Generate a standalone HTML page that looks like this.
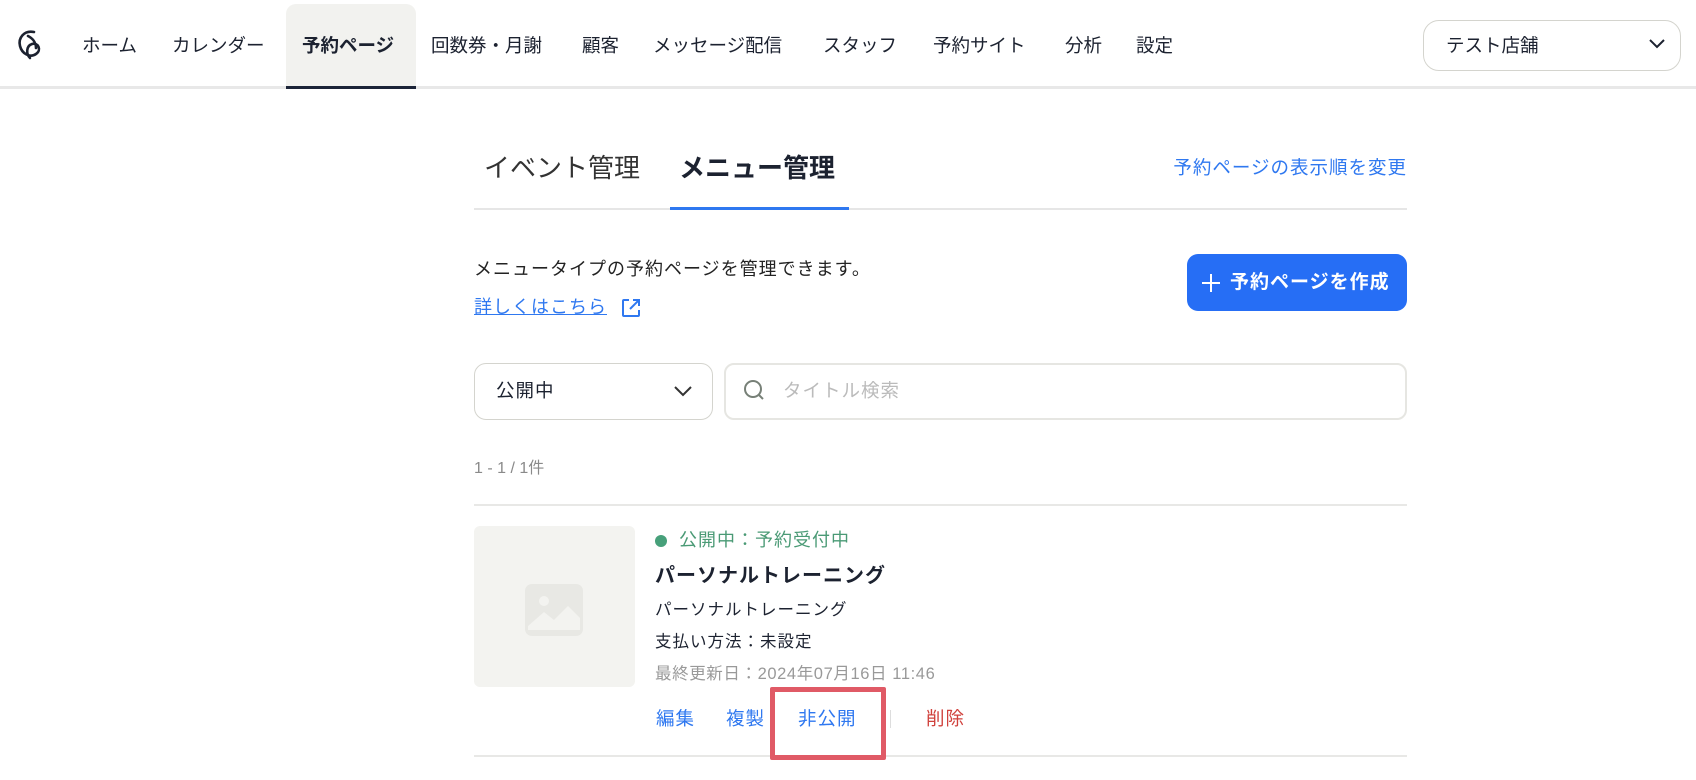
<!DOCTYPE html>
<html><head><meta charset="utf-8"><style>
*{margin:0;padding:0;box-sizing:border-box}
body{width:1696px;height:780px;background:#fff;position:relative;overflow:hidden;font-family:"Liberation Sans","Noto Sans CJK JP",sans-serif;color:#1c2230}
.a{position:absolute;white-space:nowrap}
.nav{font-size:18.5px;line-height:30px;top:31px;color:#1c2230}
.blue{color:#2f78f0}
.ls{letter-spacing:1px}
</style></head><body>
<div class="a" style="left:0;top:86px;width:1696px;height:3px;background:#e8e8e8"></div>
<div class="a" style="left:286px;top:4px;width:130px;height:83px;background:#f2f2ef;border-radius:10px 10px 0 0"></div>
<div class="a" style="left:286px;top:86px;width:130px;height:3px;background:#1c2438"></div>
<svg class="a" style="left:14px;top:28px" width="32" height="36" viewBox="0 0 32 36"><path d="M20 4 C10 2 4 10 6 18 C8 26 16 30 22 26 C28 22 24 14 18 16 C12 18 12 26 16 30 M14 8 C18 10 22 14 22 20" fill="none" stroke="#1c2230" stroke-width="2.6" stroke-linecap="round"/></svg>
<div class="a nav" style="left:82px">ホーム</div>
<div class="a nav" style="left:172px">カレンダー</div>
<div class="a nav" style="left:302px;font-weight:bold">予約ページ</div>
<div class="a nav" style="left:431px">回数券・月謝</div>
<div class="a nav" style="left:582px">顧客</div>
<div class="a nav" style="left:653px">メッセージ配信</div>
<div class="a nav" style="left:823px">スタッフ</div>
<div class="a nav" style="left:933px">予約サイト</div>
<div class="a nav" style="left:1065px">分析</div>
<div class="a nav" style="left:1136px">設定</div>
<div class="a" style="left:1423px;top:20px;width:258px;height:51px;border:1.5px solid #d4d4ce;border-radius:16px"></div>
<div class="a" style="left:1446px;top:31px;font-size:18.5px;line-height:30px">テスト店舗</div>
<svg class="a" style="left:1648px;top:38px" width="18" height="12"><path d="M2 2 L9 9 L16 2" fill="none" stroke="#1c2230" stroke-width="2"/></svg>

<div class="a" style="left:474px;top:208px;width:933px;height:2px;background:#e6e6e6"></div>
<div class="a" style="left:670px;top:207px;width:179px;height:3px;background:#2f78f0"></div>
<div class="a" style="left:484px;top:150px;font-size:26px;line-height:36px;color:#333">イベント管理</div>
<div class="a" style="left:679px;top:150px;font-size:26px;line-height:36px;font-weight:bold">メニュー管理</div>
<div class="a blue ls" style="right:289px;top:154px;font-size:18.5px;line-height:28px">予約ページの表示順を変更</div>

<div class="a ls" style="left:474px;top:255px;font-size:18px;line-height:28px;color:#222">メニュータイプの予約ページを管理できます。</div>
<div class="a blue ls" style="left:474px;top:293px;font-size:18px;line-height:28px;text-decoration:underline">詳しくはこちら</div>
<svg class="a" style="left:620px;top:297px" width="22" height="22" viewBox="0 0 22 22"><path d="M9 3 H4 Q3 3 3 4 V18 Q3 19 4 19 H18 Q19 19 19 18 V13 M13 3 H19 V9 M19 3 L10 12" fill="none" stroke="#2f78f0" stroke-width="2"/></svg>
<div class="a ls" style="left:1187px;top:254px;width:220px;height:57px;background:#266ef5;border-radius:11px;color:#fff;font-size:19px;font-weight:bold;line-height:57px;padding-left:43px">予約ページを作成</div>
<svg class="a" style="left:1200px;top:272px" width="22" height="22"><path d="M11 2 V20 M2 11 H20" stroke="#fff" stroke-width="2"/></svg>

<div class="a" style="left:474px;top:363px;width:239px;height:57px;border:1.5px solid #d4d4ce;border-radius:12px"></div>
<div class="a ls" style="left:496px;top:377px;font-size:18.5px;line-height:28px">公開中</div>
<svg class="a" style="left:673px;top:385px" width="20" height="14"><path d="M2 2 L10 10 L18 2" fill="none" stroke="#333" stroke-width="2"/></svg>
<div class="a" style="left:724px;top:363px;width:683px;height:57px;border:2px solid #e6e6e2;border-radius:10px"></div>
<svg class="a" style="left:742px;top:378px" width="26" height="26"><circle cx="11" cy="11" r="8" fill="none" stroke="#778077" stroke-width="2"/><path d="M17 17 L21 21" stroke="#778077" stroke-width="2"/></svg>
<div class="a ls" style="left:783px;top:377px;font-size:18.5px;line-height:28px;color:#bbb">タイトル検索</div>

<div class="a" style="left:474px;top:457px;font-size:16px;line-height:24px;color:#8a8a8a">1 - 1 / 1件</div>
<div class="a" style="left:474px;top:504px;width:933px;height:2px;background:#e8e8e6"></div>

<div class="a" style="left:474px;top:526px;width:161px;height:161px;background:#f3f3f0;border-radius:6px"></div>
<svg class="a" style="left:523px;top:582px" width="62" height="56" viewBox="0 0 62 56"><rect x="2" y="2" width="58" height="52" rx="7" fill="#e8e8e4"/><circle cx="21" cy="19" r="5" fill="#f3f3f0"/><path d="M5 44 L21 30 L31 38 L45 24 L57 36 V48 H5Z" fill="#f3f3f0"/></svg>
<div class="a" style="left:655px;top:535px;width:12px;height:12px;border-radius:50%;background:#47a07a"></div>
<div class="a ls" style="left:679px;top:527px;font-size:18px;line-height:26px;color:#4a9a75">公開中：予約受付中</div>
<div class="a ls" style="left:655px;top:562px;font-size:20px;line-height:28px;font-weight:bold">パーソナルトレーニング</div>
<div class="a ls" style="left:655px;top:598px;font-size:16.5px;line-height:24px">パーソナルトレーニング</div>
<div class="a ls" style="left:655px;top:630px;font-size:16.5px;line-height:24px">支払い方法：未設定</div>
<div class="a" style="left:655px;top:662px;font-size:16.5px;line-height:24px;color:#999;letter-spacing:0.6px">最終更新日：2024年07月16日 11:46</div>
<div class="a blue ls" style="left:656px;top:705px;font-size:18.5px;line-height:28px">編集</div>
<div class="a blue ls" style="left:726px;top:705px;font-size:18.5px;line-height:28px">複製</div>
<div class="a blue ls" style="left:798px;top:705px;font-size:18.5px;line-height:28px">非公開</div>
<div class="a" style="left:890px;top:710px;width:1px;height:18px;background:#ddd"></div>
<div class="a ls" style="left:926px;top:705px;font-size:18.5px;line-height:28px;color:#d0413c">削除</div>
<div class="a" style="left:474px;top:755px;width:933px;height:2px;background:#e8e8e6"></div>
<div class="a" style="left:770px;top:687px;width:116px;height:73px;border:5px solid #e05a66;border-radius:2px"></div>
</body></html>
